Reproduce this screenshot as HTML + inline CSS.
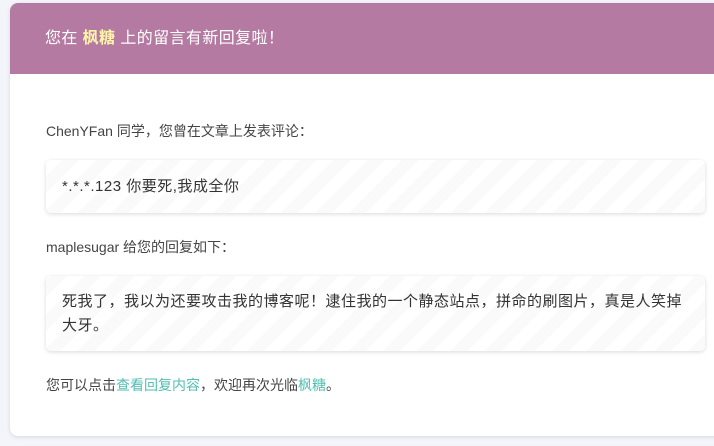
<!DOCTYPE html>
<html><head><meta charset="utf-8"><style>
html,body{margin:0;padding:0;}
body{width:714px;height:446px;background:#f4f5fb;overflow:hidden;position:relative;font-family:"Liberation Sans","Noto Sans CJK SC",sans-serif;font-size:14px;color:#444;}
.card{position:absolute;left:10px;top:3px;width:720px;height:433px;background:#fff;border-radius:8px;box-shadow:0 1px 4px rgba(0,0,0,.12);overflow:hidden;}
.hd{height:71px;background:#b47aa2;color:#fff;font-size:16px;line-height:71px;padding-left:35px;letter-spacing:0.4px;}
.hd b{color:#fff6a8;font-weight:bold;}
p{margin:0;position:absolute;left:36px;}
.box{position:absolute;left:36px;width:659px;border-radius:5px;box-shadow:0 1px 4px rgba(0,0,0,.15);
background:repeating-linear-gradient(-45deg,#fafafa 0 12px,#fff 12px 24px);padding:0 14px 0 16px;box-sizing:border-box;line-height:24px;color:#333;font-size:15px;letter-spacing:0.5px;}
a{color:#4fbfb1;text-decoration:none;}
</style></head><body>
<div class="card">
<div class="hd">您在 <b>枫糖</b> 上的留言有新回复啦！</div>
<p style="top:118px">ChenYFan 同学，您曾在文章上发表评论：</p>
<div class="box" style="top:157px;height:53px;padding-top:15px;">*.*.*.123 你要死,我成全你</div>
<p style="top:234px">maplesugar 给您的回复如下：</p>
<div class="box" style="top:273px;height:75px;padding-top:14px;">死我了，我以为还要攻击我的博客呢！逮住我的一个静态站点，拼命的刷图片，真是人笑掉大牙。</div>
<p style="top:372px">您可以点击<a>查看回复内容</a>，欢迎再次光临<a>枫糖</a>。</p>
</div>
</body></html>
